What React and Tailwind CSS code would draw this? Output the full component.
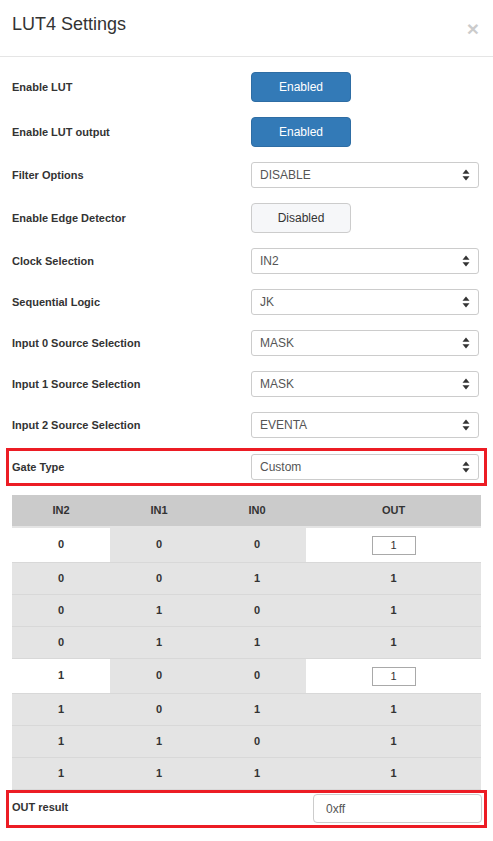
import React from 'react';

const SelectArrows = () => (
  <svg width="8" height="12" viewBox="0 0 8 12" className="absolute right-[8px] top-1/2 -translate-y-1/2">
    <path d="M4 0.5 L7.5 4.8 L0.5 4.8 Z" fill="#333" />
    <path d="M4 11.5 L7.5 7.2 L0.5 7.2 Z" fill="#333" />
  </svg>
);

const Select = ({ value }) => (
  <div className="relative w-[228px] h-[26px] border border-[#ccc] rounded-[3px] bg-white flex items-center pl-[8px] text-[12px] text-[#555]">
    {value}
    <SelectArrows />
  </div>
);

const Button = ({ on, label }) => (
  <div
    className={
      on
        ? 'w-[100px] h-[30px] rounded-[4px] bg-[#337ab7] border border-[#2e6da4] text-white text-[12px] flex items-center justify-center'
        : 'w-[100px] h-[30px] rounded-[4px] bg-[#f6f7f9] border border-[#ccc] text-[#333] text-[12px] flex items-center justify-center'
    }
  >
    {label}
  </div>
);

const Row = ({ label, children }) => (
  <div className="flex items-center mb-[15px]">
    <div className="w-[239px] text-[11px] font-bold text-[#333]">{label}</div>
    {children}
  </div>
);

const rows = [
  [0, 0, 0, 1, true],
  [0, 0, 1, 1, false],
  [0, 1, 0, 1, false],
  [0, 1, 1, 1, false],
  [1, 0, 0, 1, true],
  [1, 0, 1, 1, false],
  [1, 1, 0, 1, false],
  [1, 1, 1, 1, false],
];

export default function App() {
  return (
    <div className="w-[493px] h-[841px] bg-white overflow-hidden" style={{ fontFamily: '"Liberation Sans", Arial, sans-serif' }}>
      {/* header */}
      <div className="h-[57px] border-b border-[#e5e5e5] flex items-start justify-between px-[12px]">
        <div className="text-[18px] text-[#333] mt-[13px] leading-[22px]">LUT4 Settings</div>
        <div className="text-[21px] font-bold text-[#000] opacity-20 mt-[17px] mr-[2px] leading-[24px]">×</div>
      </div>

      <div className="px-[12px] pt-[15px]">
        <Row label="Enable LUT"><Button on label="Enabled" /></Row>
        <Row label="Enable LUT output"><Button on label="Enabled" /></Row>
        <Row label="Filter Options"><Select value="DISABLE" /></Row>
        <Row label="Enable Edge Detector"><Button label="Disabled" /></Row>
        <Row label="Clock Selection"><Select value="IN2" /></Row>
        <Row label="Sequential Logic"><Select value="JK" /></Row>
        <Row label="Input 0 Source Selection"><Select value="MASK" /></Row>
        <Row label="Input 1 Source Selection"><Select value="MASK" /></Row>
        <Row label="Input 2 Source Selection"><Select value="EVENTA" /></Row>

        {/* Gate type (highlighted) */}
        <div className="-mx-[6px] -mt-[5px] border-[3px] border-[#ec1c24] p-[3px] flex items-center">
          <div className="w-[239px] text-[11px] font-bold text-[#333]">Gate Type</div>
          <Select value="Custom" />
        </div>

        {/* truth table */}
        <div className="mt-[9px] text-[11px] font-bold text-[#333]">
          <div className="flex h-[33px] bg-[#cbcbcb] items-center border-b-2 border-[#e4e4e4]">
            <div className="w-[98px] text-center">IN2</div>
            <div className="w-[98px] text-center">IN1</div>
            <div className="w-[98px] text-center">IN0</div>
            <div className="flex-1 text-center">OUT</div>
          </div>
          {rows.map((r, i) => (
            <div
              key={i}
              className={
                r[4]
                  ? 'flex h-[35px] border-b border-[#d8d8d8]'
                  : 'flex h-[32px] bg-[#e4e4e4] border-b border-[#d8d8d8]'
              }
            >
              <div className={r[4] ? 'w-[98px] flex items-center justify-center bg-white pb-[2px]' : 'w-[98px] flex items-center justify-center'}>{r[0]}</div>
              <div className={r[4] ? 'w-[98px] flex items-center justify-center bg-[#e4e4e4] pb-[2px]' : 'w-[98px] flex items-center justify-center'}>{r[1]}</div>
              <div className={r[4] ? 'w-[98px] flex items-center justify-center bg-[#e4e4e4] pb-[2px]' : 'w-[98px] flex items-center justify-center'}>{r[2]}</div>
              <div className={r[4] ? 'flex-1 flex items-center justify-center bg-white' : 'flex-1 flex items-center justify-center'}>
                {r[4] ? (
                  <div className="w-[44px] h-[19px] border border-[#a9a9a9] flex items-center justify-center font-normal">{r[3]}</div>
                ) : (
                  r[3]
                )}
              </div>
            </div>
          ))}
        </div>

        {/* OUT result (highlighted) */}
        <div className="-mx-[6px] border-[3px] border-[#ec1c24] pt-[1px] pb-[2px] flex items-center">
          <div className="pl-[3px] flex-1 text-[11px] font-bold text-[#333] -mt-[3px]">OUT result</div>
          <div className="w-[169px] h-[29px] mr-[2px] border border-[#ccc] rounded-[4px] flex items-center pl-[12px] text-[12px] text-[#555]">0xff</div>
        </div>
      </div>
    </div>
  );
}
